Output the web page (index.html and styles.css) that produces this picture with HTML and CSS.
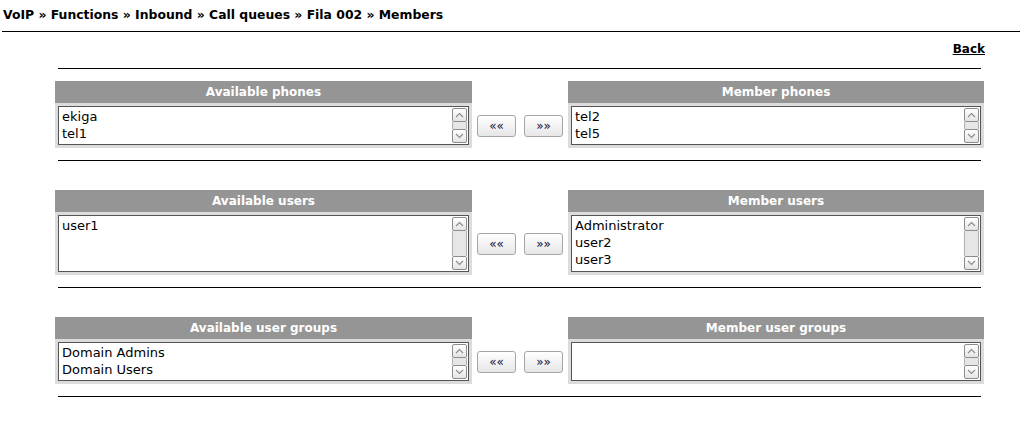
FILE: index.html
```html
<!DOCTYPE html>
<html>
<head>
<meta charset="utf-8">
<link rel="stylesheet" href="styles.css">
</head>
<body>
<div class="crumb">VoIP » Functions » Inbound » Call queues » Fila 002 » Members</div>
<div class="content">
  <div class="back-row"><a class="back" href="#">Back</a></div>
  <div class="rule"></div>

  <section class="group first">
    <div class="head">Available phones</div>
    <div class="head-gap"></div>
    <div class="head">Member phones</div>
    <div class="frame"><div class="list two">
      <div class="opts"><div>ekiga</div><div>tel1</div></div>
      <div class="sb"><div class="sbtn up"><svg width="9" height="6" viewBox="0 0 9 6"><polyline points="1,5 4.5,1.5 8,5" /></svg></div><div class="track"></div><div class="sbtn dn"><svg width="9" height="6" viewBox="0 0 9 6"><polyline points="1,1 4.5,4.5 8,1" /></svg></div></div>
    </div></div>
    <div class="mid"><button class="mv">««</button><button class="mv">»»</button></div>
    <div class="frame"><div class="list two">
      <div class="opts"><div>tel2</div><div>tel5</div></div>
      <div class="sb"><div class="sbtn up"><svg width="9" height="6" viewBox="0 0 9 6"><polyline points="1,5 4.5,1.5 8,5" /></svg></div><div class="track"></div><div class="sbtn dn"><svg width="9" height="6" viewBox="0 0 9 6"><polyline points="1,1 4.5,4.5 8,1" /></svg></div></div>
    </div></div>
  </section>
  <div class="rule"></div>

  <section class="group">
    <div class="head">Available users</div>
    <div class="head-gap"></div>
    <div class="head">Member users</div>
    <div class="frame"><div class="list three">
      <div class="opts"><div>user1</div></div>
      <div class="sb"><div class="sbtn up"><svg width="9" height="6" viewBox="0 0 9 6"><polyline points="1,5 4.5,1.5 8,5" /></svg></div><div class="track"></div><div class="sbtn dn"><svg width="9" height="6" viewBox="0 0 9 6"><polyline points="1,1 4.5,4.5 8,1" /></svg></div></div>
    </div></div>
    <div class="mid"><button class="mv">««</button><button class="mv">»»</button></div>
    <div class="frame"><div class="list three">
      <div class="opts"><div>Administrator</div><div>user2</div><div>user3</div></div>
      <div class="sb"><div class="sbtn up"><svg width="9" height="6" viewBox="0 0 9 6"><polyline points="1,5 4.5,1.5 8,5" /></svg></div><div class="track"></div><div class="sbtn dn"><svg width="9" height="6" viewBox="0 0 9 6"><polyline points="1,1 4.5,4.5 8,1" /></svg></div></div>
    </div></div>
  </section>
  <div class="rule"></div>

  <section class="group">
    <div class="head">Available user groups</div>
    <div class="head-gap"></div>
    <div class="head">Member user groups</div>
    <div class="frame"><div class="list two">
      <div class="opts"><div>Domain Admins</div><div>Domain Users</div></div>
      <div class="sb"><div class="sbtn up"><svg width="9" height="6" viewBox="0 0 9 6"><polyline points="1,5 4.5,1.5 8,5" /></svg></div><div class="track"></div><div class="sbtn dn"><svg width="9" height="6" viewBox="0 0 9 6"><polyline points="1,1 4.5,4.5 8,1" /></svg></div></div>
    </div></div>
    <div class="mid"><button class="mv">««</button><button class="mv">»»</button></div>
    <div class="frame"><div class="list two">
      <div class="opts"></div>
      <div class="sb"><div class="sbtn up"><svg width="9" height="6" viewBox="0 0 9 6"><polyline points="1,5 4.5,1.5 8,5" /></svg></div><div class="track"></div><div class="sbtn dn"><svg width="9" height="6" viewBox="0 0 9 6"><polyline points="1,1 4.5,4.5 8,1" /></svg></div></div>
    </div></div>
  </section>
  <div class="rule"></div>
</div>
</body>
</html>
```

FILE: styles.css
```css
* { box-sizing: border-box; }
html, body { margin: 0; padding: 0; background: #fff; }
body {
  font-family: "DejaVu Sans", Verdana, sans-serif;
  color: #000;
  width: 1020px;
  height: 441px;
  overflow: hidden;
}
.crumb {
  margin: 0 0 0 2px;
  padding: 7px 1px 8px 1px;
  font-size: 12.4px;
  line-height: 16px;
  font-weight: bold;
  border-bottom: 1px solid #000;
}
.content {
  margin-left: 55px;
  width: 929px;
}
.back-row {
  padding-top: 9px;
  text-align: right;
  font-size: 12px;
  line-height: 16px;
  margin-right: -1px;
}
.back {
  color: #000;
  font-weight: bold;
  text-decoration: underline;
}
.rule {
  height: 1px;
  background: #000;
  margin: 11px 3px 0 3px;
}
.group {
  display: grid;
  grid-template-columns: 417px 96px 416px;
  grid-template-rows: 22px auto;
  margin-top: 29px;
  margin-bottom: 12px;
}
.group.first { margin-top: 12px; }
.group + .rule { margin-top: 0; }
.head {
  background: #959595;
  color: #fff;
  font-size: 12px;
  font-weight: bold;
  line-height: 22px;
  text-align: center;
}
.frame {
  background: #dcdcdc;
  padding: 3px;
}
.list {
  display: flex;
  background: #fff;
  border: 1px solid #555;
}
.list.two { height: 39px; }
.list.three { height: 57px; }
.opts {
  flex: 1;
  padding: 1px 3px;
  font-size: 13px;
  line-height: 17px;
}
.sb {
  width: 15px;
  margin: 1px 1px 1px 0;
  display: flex;
  flex-direction: column;
}
.sbtn {
  height: 14px;
  border: 1px solid #8c8c8c;
  border-radius: 2px;
  background: linear-gradient(#ffffff, #e4e4e4);
  display: flex;
  align-items: center;
  justify-content: center;
}
.sbtn svg polyline {
  fill: none;
  stroke: #8a8a8a;
  stroke-width: 1.1;
}
.track {
  flex: 1;
  background: #e6e6e6;
  border-left: 1px solid #b0b0b0;
  border-right: 1px solid #b0b0b0;
}
.mid {
  display: flex;
  align-items: center;
  justify-content: center;
  gap: 8px;
}
.mv {
  width: 39px;
  height: 22px;
  margin: 0;
  padding: 0;
  border: 1px solid #a5a5a5;
  border-radius: 3px;
  background: linear-gradient(#ffffff, #e6e6e6);
  font-family: "DejaVu Sans", Verdana, sans-serif;
  font-size: 12px;
  color: #10103a;
  line-height: 20px;
}
```
